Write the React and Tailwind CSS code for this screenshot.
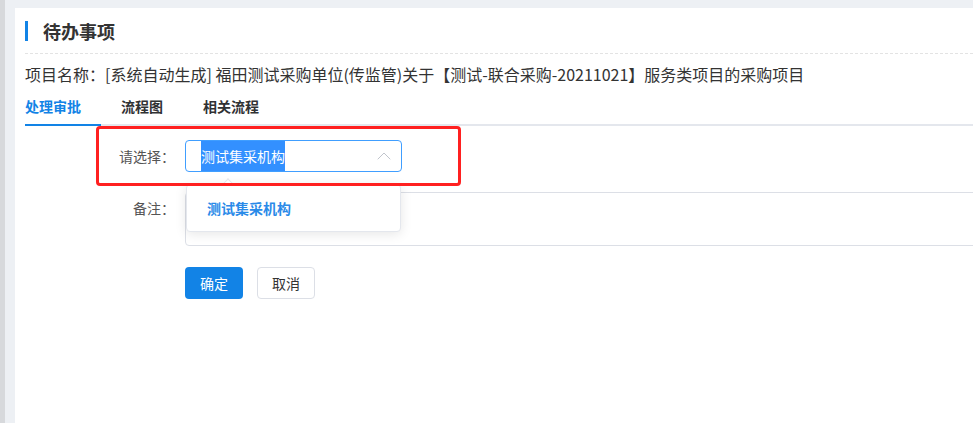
import React from 'react';
import { ChevronUp } from 'lucide-react';

const tabs = ['处理审批', '流程图', '相关流程'];

const App = () => {
  return (
    <div className="flex h-[423px] w-[973px] overflow-hidden bg-[#edf0f4] font-['Noto_Sans_CJK_SC',sans-serif]">
      {/* left strip */}
      <div className="w-[5px] shrink-0 bg-[#d7d9dc]" />

      <div className="min-w-0 flex-1 overflow-hidden pl-[10px] pt-[8px]">
        <div className="relative h-full overflow-hidden bg-white pl-[10px]">
          {/* Header */}
          <div className="flex h-[46px] items-center border-b border-dashed border-[#e3e3e3]">
            <span className="h-[20px] w-[3px] bg-[#1283e6]" />
            <h1 className="ml-[15px] text-[18px] font-bold leading-[24px] text-[#333]">待办事项</h1>
          </div>

          {/* Project name */}
          <div className="whitespace-nowrap pt-[9px] text-[16px] leading-[22px] text-[#333]">
            项目名称：[系统自动生成] 福田测试采购单位(传监管)关于【测试-联合采购-20211021】服务类项目的采购项目
          </div>

          {/* Tabs */}
          <div className="flex h-[41px] border-b-2 border-[#e4e7ed]">
            {tabs.map((t, i) => (
              <div
                key={t}
                className={
                  i === 0
                    ? '-mb-[2px] border-b-2 border-[#1283e6] pr-[20px] pt-[1px] text-[14px] font-bold leading-[40px] text-[#1283e6]'
                    : 'px-[20px] pt-[1px] text-[14px] font-bold leading-[40px] text-[#303133]'
                }
              >
                {t}
              </div>
            ))}
          </div>

          {/* Form */}
          <div className="pt-[14px]">
            <div className="flex">
              <label className="w-[160px] shrink-0 pr-[10px] text-right text-[14px] leading-[32px] text-[#555]">请选择：</label>
              <div className="flex h-[32px] w-[217px] shrink-0 items-center rounded-[4px] border border-[#409eff] pl-[15px] pr-[5px]">
                <span className="h-full bg-[#3390ff] text-[14px] leading-[30px] text-white">测试集采机构</span>
                <ChevronUp size={24} strokeWidth={1} className="ml-auto text-[#c0c4cc]" />
              </div>
            </div>

            <div className="mt-[20px] flex">
              <label className="w-[160px] shrink-0 pr-[10px] text-right text-[14px] leading-[32px] text-[#555]">备注：</label>
              <div className="h-[54px] w-[800px] shrink-0 rounded-[4px] border border-[#dcdfe6]" />
            </div>

            <div className="ml-[160px] mt-[21px] flex gap-[14px]">
              <button className="h-[32px] w-[58px] rounded-[4px] bg-[#1283e6] text-[14px] text-white">确定</button>
              <button className="h-[32px] w-[58px] rounded-[4px] border border-[#dcdfe6] bg-white text-[14px] text-[#333]">取消</button>
            </div>
          </div>

          {/* Select dropdown */}
          <div className="absolute left-[171px] top-[176px] w-[215px] rounded-[4px] border border-[#e4e7ed] bg-white py-[6px] shadow-[0_2px_12px_0_rgba(0,0,0,0.1)]">
            <span className="absolute -top-[5px] left-[37px] h-[8px] w-[8px] rotate-45 border-l border-t border-[#e4e7ed] bg-white" />
            <div className="h-[34px] pl-[20px] text-[14px] font-bold leading-[34px] text-[#2a8ae8]">测试集采机构</div>
          </div>

          {/* annotation box */}
          <div className="absolute left-[81px] top-[118px] h-[60px] w-[365px] rounded-[4px] border-[3px] border-[#ff2020]" />
        </div>
      </div>
    </div>
  );
};

export default App;
